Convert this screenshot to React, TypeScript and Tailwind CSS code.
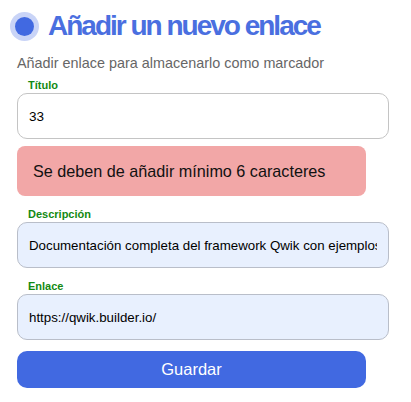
export default function App() {
    return (
        <div className="w-[411px] h-[402px] bg-white font-['Liberation_Sans',Arial,sans-serif] overflow-hidden">
            <div className="pl-[17px] pt-[10px]">
                {/* Title with dot */}
                <div className="flex items-center -ml-[7px]">
                    <span className="w-[29px] h-[29px] rounded-full bg-[#c9d4f7] flex items-center justify-center">
                        <span className="w-[19px] h-[19px] rounded-full bg-[#4169e1]"></span>
                    </span>
                    <h1 className="ml-[9px] text-[28px] leading-[32px] font-bold text-[#4a6fe0] tracking-[-2px]">
                        Añadir un nuevo enlace
                    </h1>
                </div>
                <p className="mt-[12px] text-[14.4px] leading-[18px] text-[#666]">
                    Añadir enlace para almacenarlo como marcador
                </p>

                <form className="mt-[6px] flex flex-col">
                    <label className="pl-[11px] text-[11px] leading-[14px] font-bold text-[#138a13]">Título</label>
                    <input
                        defaultValue="33"
                        className="mt-[1px] w-[372px] h-[46px] px-[11px] rounded-[10px] border border-[#c4c4c4] bg-white text-[13.5px] text-black outline-none"
                    />
                    <div className="mt-[7px] w-[349px] h-[50px] rounded-[8px] bg-[#f2a7a7] flex items-center pl-[16px] text-[16.2px] text-[#111]">
                        Se deben de añadir mínimo 6 caracteres
                    </div>

                    <label className="mt-[11px] pl-[11px] text-[11px] leading-[14px] font-bold text-[#138a13]">Descripción</label>
                    <input
                        defaultValue="Documentación completa del framework Qwik con ejemplos y guías"
                        className="mt-[1px] w-[372px] h-[46px] px-[11px] rounded-[10px] border border-[#b9bec9] bg-[#e8f0fe] text-[13.3px] text-black outline-none"
                    />

                    <label className="mt-[11px] pl-[11px] text-[11px] leading-[14px] font-bold text-[#138a13]">Enlace</label>
                    <input
                        defaultValue="https://qwik.builder.io/"
                        className="mt-[1px] w-[372px] h-[46px] px-[11px] rounded-[10px] border border-[#b9bec9] bg-[#e8f0fe] text-[13.3px] text-black outline-none"
                    />

                    <button
                        type="button"
                        className="mt-[11px] w-[349px] h-[37px] rounded-[10px] bg-[#4169e1] text-white text-[16.5px]"
                    >
                        Guardar
                    </button>
                </form>
            </div>
        </div>
    );
}
